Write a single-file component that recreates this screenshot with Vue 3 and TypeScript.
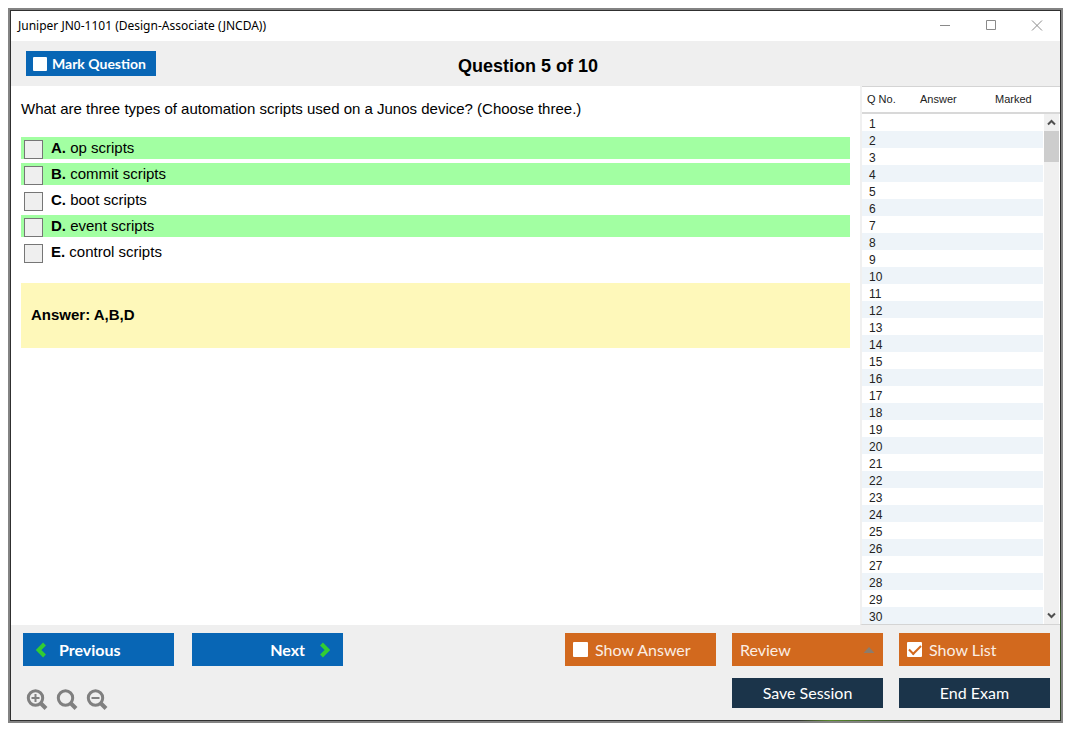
<script setup lang="ts">
import { ref } from 'vue'

interface Option {
  letter: string
  text: string
  correct: boolean
}

const options: Option[] = [
  { letter: 'A', text: 'op scripts', correct: true },
  { letter: 'B', text: 'commit scripts', correct: true },
  { letter: 'C', text: 'boot scripts', correct: false },
  { letter: 'D', text: 'event scripts', correct: true },
  { letter: 'E', text: 'control scripts', correct: false },
]

const selected = ref<string[]>([])
const marked = ref(false)
const showAnswer = ref(false)
const showList = ref(true)
</script>

<template>
  <div class="desktop">
    <div class="window">
      <div class="frame">
        <header class="titlebar">
          <span class="app-title">Juniper JN0-1101 (Design-Associate (JNCDA))</span>
          <div class="window-controls">
            <button type="button" aria-label="Minimize">
              <svg width="12" height="12" viewBox="0 0 12 12"><path d="M1 5.5H11" /></svg>
            </button>
            <button type="button" aria-label="Maximize">
              <svg width="12" height="12" viewBox="0 0 12 12"><path d="M1.5 0.5H10.5V9.5H1.5Z" /></svg>
            </button>
            <button type="button" aria-label="Close">
              <svg width="12" height="12" viewBox="0 0 12 12"><path d="M1 0.5L11 10.5M11 0.5L1 10.5" /></svg>
            </button>
          </div>
        </header>

        <div class="question-bar">
          <label class="mark"><input v-model="marked" type="checkbox" class="tick small" />Mark Question</label>
          <h1>Question 5 of 10</h1>
        </div>

        <div class="body">
          <main>
            <p class="question">What are three types of automation scripts used on a Junos device? (Choose three.)</p>
            <div class="options">
              <label v-for="o in options" :key="o.letter" class="option" :class="{ correct: o.correct }">
                <input v-model="selected" type="checkbox" :value="o.letter" />
                <span><b>{{ o.letter }}.</b> {{ o.text }}</span>
              </label>
            </div>
            <div class="answer">Answer: A,B,D</div>
          </main>

          <aside v-show="showList">
            <table>
              <colgroup><col class="c-no" /><col class="c-answer" /><col /></colgroup>
              <thead>
                <tr><th scope="col">Q No.</th><th scope="col">Answer</th><th scope="col">Marked</th></tr>
              </thead>
              <tbody>
                <tr v-for="n in 30" :key="n"><td>{{ n }}</td><td></td><td></td></tr>
              </tbody>
            </table>
            <div class="scrollbar">
              <button type="button" aria-label="Scroll up">
                <svg width="9" height="7" viewBox="0 0 9 7"><path d="M1 5.5L4.5 2L8 5.5" /></svg>
              </button>
              <div class="thumb"></div>
              <button type="button" class="down" aria-label="Scroll down">
                <svg width="9" height="7" viewBox="0 0 9 7"><path d="M1 1.5L4.5 5L8 1.5" /></svg>
              </button>
            </div>
          </aside>
        </div>

        <footer>
          <div class="left">
            <div class="nav">
              <button type="button" class="btn blue">
                <svg width="10" height="16" viewBox="0 0 10 16"><path d="M8.5 2L2.5 8L8.5 14" /></svg>
                Previous
              </button>
              <button type="button" class="btn blue next">
                Next
                <svg width="10" height="16" viewBox="0 0 10 16"><path d="M1.5 2L7.5 8L1.5 14" /></svg>
              </button>
            </div>
            <div class="zoom">
              <button type="button" aria-label="Zoom in">
                <svg width="22" height="22" viewBox="0 0 22 22">
                  <circle cx="9.5" cy="9" r="7.2" /><path class="handle" d="M14.5 14L20 19.5" /><path class="sign" d="M5.5 9H13.5M9.5 5V13" />
                </svg>
              </button>
              <button type="button" aria-label="Reset zoom">
                <svg width="22" height="22" viewBox="0 0 22 22">
                  <circle cx="9.5" cy="9" r="7.2" /><path class="handle" d="M14.5 14L20 19.5" />
                </svg>
              </button>
              <button type="button" aria-label="Zoom out">
                <svg width="22" height="22" viewBox="0 0 22 22">
                  <circle cx="9.5" cy="9" r="7.2" /><path class="handle" d="M14.5 14L20 19.5" /><path class="sign" d="M5.5 9H13.5" />
                </svg>
              </button>
            </div>
          </div>
          <div class="right">
            <label class="btn orange"><input v-model="showAnswer" type="checkbox" class="tick" />Show Answer</label>
            <button type="button" class="btn orange review" aria-haspopup="menu">
              Review
              <svg width="12" height="6" viewBox="0 0 12 6"><path d="M0.5 6L6 0L11.5 6Z" /></svg>
            </button>
            <label class="btn orange"><input v-model="showList" type="checkbox" class="tick" />Show List</label>
            <button type="button" class="btn navy save">Save Session</button>
            <button type="button" class="btn navy">End Exam</button>
          </div>
        </footer>
      </div>
    </div>
  </div>
</template>

<style>
body {
  background: #fff;
}
</style>

<style scoped>
* {
  box-sizing: border-box;
}
.desktop {
  display: flex;
  min-height: 100vh;
  padding: 8px 12px 12px 8px;
  font-family: 'Liberation Sans', Arial, sans-serif;
  color: #000;
}
button {
  border: 0;
  padding: 0;
  background: none;
  font: inherit;
  color: inherit;
}
svg {
  display: block;
  fill: none;
}
.window {
  flex: 1;
  display: flex;
  border: 2px solid #838383;
  padding: 1px;
  background:
    linear-gradient(90deg, #303030 75%, #5a8a2c 78%, #3d5a2b 83%, #2c3329 88%, #303030) bottom / 100% 1px no-repeat,
    linear-gradient(#303030 82%, #3d5a2b 85%, #35472b) right / 1px 100% no-repeat,
    #303030;
}
.frame {
  flex: 1;
  display: flex;
  flex-direction: column;
  background: #fff;
  min-width: 0;
}
.titlebar {
  display: flex;
  align-items: center;
  justify-content: space-between;
  height: 30px;
  padding-left: 7px;
}
.app-title {
  font: 12px/16px 'Noto Sans', 'Segoe UI', sans-serif;
}
.window-controls {
  display: flex;
}
.window-controls button {
  display: grid;
  place-items: center;
  width: 46px;
  height: 28px;
}
.window-controls path {
  stroke: #8a8a8a;
}
.question-bar {
  display: grid;
  grid-template-columns: 1fr auto 1fr;
  align-items: center;
  height: 45px;
  padding: 0 30px 0 15px;
  background: #efefef;
}
.mark {
  justify-self: start;
  display: flex;
  align-items: center;
  gap: 5px;
  height: 25px;
  width: 130px;
  padding-left: 7px;
  background: #0866b5;
  color: #fff;
  font: bold 14px/18px Lato, Calibri, sans-serif;
}
h1 {
  margin: 4px 0 0;
  font-size: 18px;
  line-height: 22px;
}
.tick {
  appearance: none;
  flex: none;
  width: 15px;
  height: 15px;
  margin: 0;
  border-radius: 1px;
  background: #fff;
  display: grid;
  place-items: center;
}
.tick.small {
  width: 14px;
  height: 14px;
}
.tick:checked::after {
  content: '';
  width: 10px;
  height: 5px;
  margin-bottom: 3px;
  border: solid #d2691e;
  border-width: 0 0 2px 2px;
  transform: rotate(-45deg);
}
.body {
  flex: 1;
  display: flex;
}
main {
  flex: 1;
  padding: 14px 10px;
  font-size: 15px;
  line-height: 18px;
}
.question {
  margin: 0 0 19px;
}
.options {
  display: grid;
  gap: 4px;
}
.option {
  display: flex;
  gap: 8px;
  height: 22px;
  padding: 3px 3px 0;
}
.option.correct {
  background: #a2ffa2;
}
.option input {
  appearance: none;
  flex: none;
  width: 19px;
  height: 19px;
  margin: 0;
  border: 1px solid #767676;
  background: #efefef;
}
.option input:checked {
  background: #767676;
}
.option span {
  line-height: 16px;
}
.answer {
  margin-top: 20px;
  padding: 23px 10px 24px;
  background: #fef8ba;
  font-weight: bold;
}
aside {
  position: relative;
  width: 200px;
  border-left: 2px solid #f0f0f0;
  border-bottom: 1px solid #d4d4d4;
}
table {
  width: 100%;
  table-layout: fixed;
  border-collapse: separate;
  border-spacing: 0;
  font-size: 11px;
  line-height: 13px;
  color: #222;
}
.c-no {
  width: 53px;
}
.c-answer {
  width: 75px;
}
th {
  height: 28px;
  padding: 0 0 0 5px;
  border-top: 1px solid #d4d4d4;
  border-bottom: 2px solid #d8d8d8;
  font-weight: normal;
  text-align: left;
}
td {
  height: 17px;
  padding: 4px 7px 0;
}
td:first-child {
  font-size: 12px;
}
tbody tr:nth-child(even) {
  background: #eef4f9;
}
.scrollbar {
  position: absolute;
  top: 28px;
  right: 0;
  bottom: 0;
  width: 17px;
  display: flex;
  flex-direction: column;
  background: #f0f0f0;
  border: solid #fff;
  border-width: 0 1px;
}
.scrollbar button {
  display: grid;
  place-items: center;
  height: 17px;
}
.scrollbar path {
  stroke: #505050;
  stroke-width: 2;
}
.thumb {
  height: 31px;
  background: #cdcdcd;
}
.scrollbar .down {
  margin-top: auto;
}
footer {
  display: flex;
  align-items: flex-start;
  justify-content: space-between;
  padding: 8px 10px 9px 12px;
  background: #efefef;
}
.nav {
  display: flex;
  gap: 18px;
}
.btn {
  display: flex;
  align-items: center;
  width: 151px;
  height: 33px;
  padding: 0 8px;
  color: #fff;
  font: 16px/22px Lato, Calibri, sans-serif;
}
.blue {
  gap: 13px;
  padding: 0 13px;
  background: #0866b5;
  font-weight: bold;
}
.blue path {
  stroke: #32cd32;
  stroke-width: 4;
}
.next {
  gap: 15px;
  justify-content: flex-end;
}
.orange {
  gap: 7px;
  background: #d2691e;
  color: #fbeee4;
}
.review {
  justify-content: space-between;
}
.review path {
  fill: #8c7c6c;
}
.navy {
  justify-content: center;
  height: 30px;
  background: #1b344a;
}
.save {
  grid-column: 2;
}
.zoom {
  display: flex;
  gap: 8px;
  padding: 23px 3px 0;
}
.zoom svg {
  stroke: #808080;
  stroke-width: 3;
}
.zoom .handle {
  stroke-width: 4;
}
.zoom .sign {
  stroke-width: 2;
}
.right {
  display: grid;
  grid-template-columns: repeat(3, auto);
  gap: 12px 16px;
}
</style>
